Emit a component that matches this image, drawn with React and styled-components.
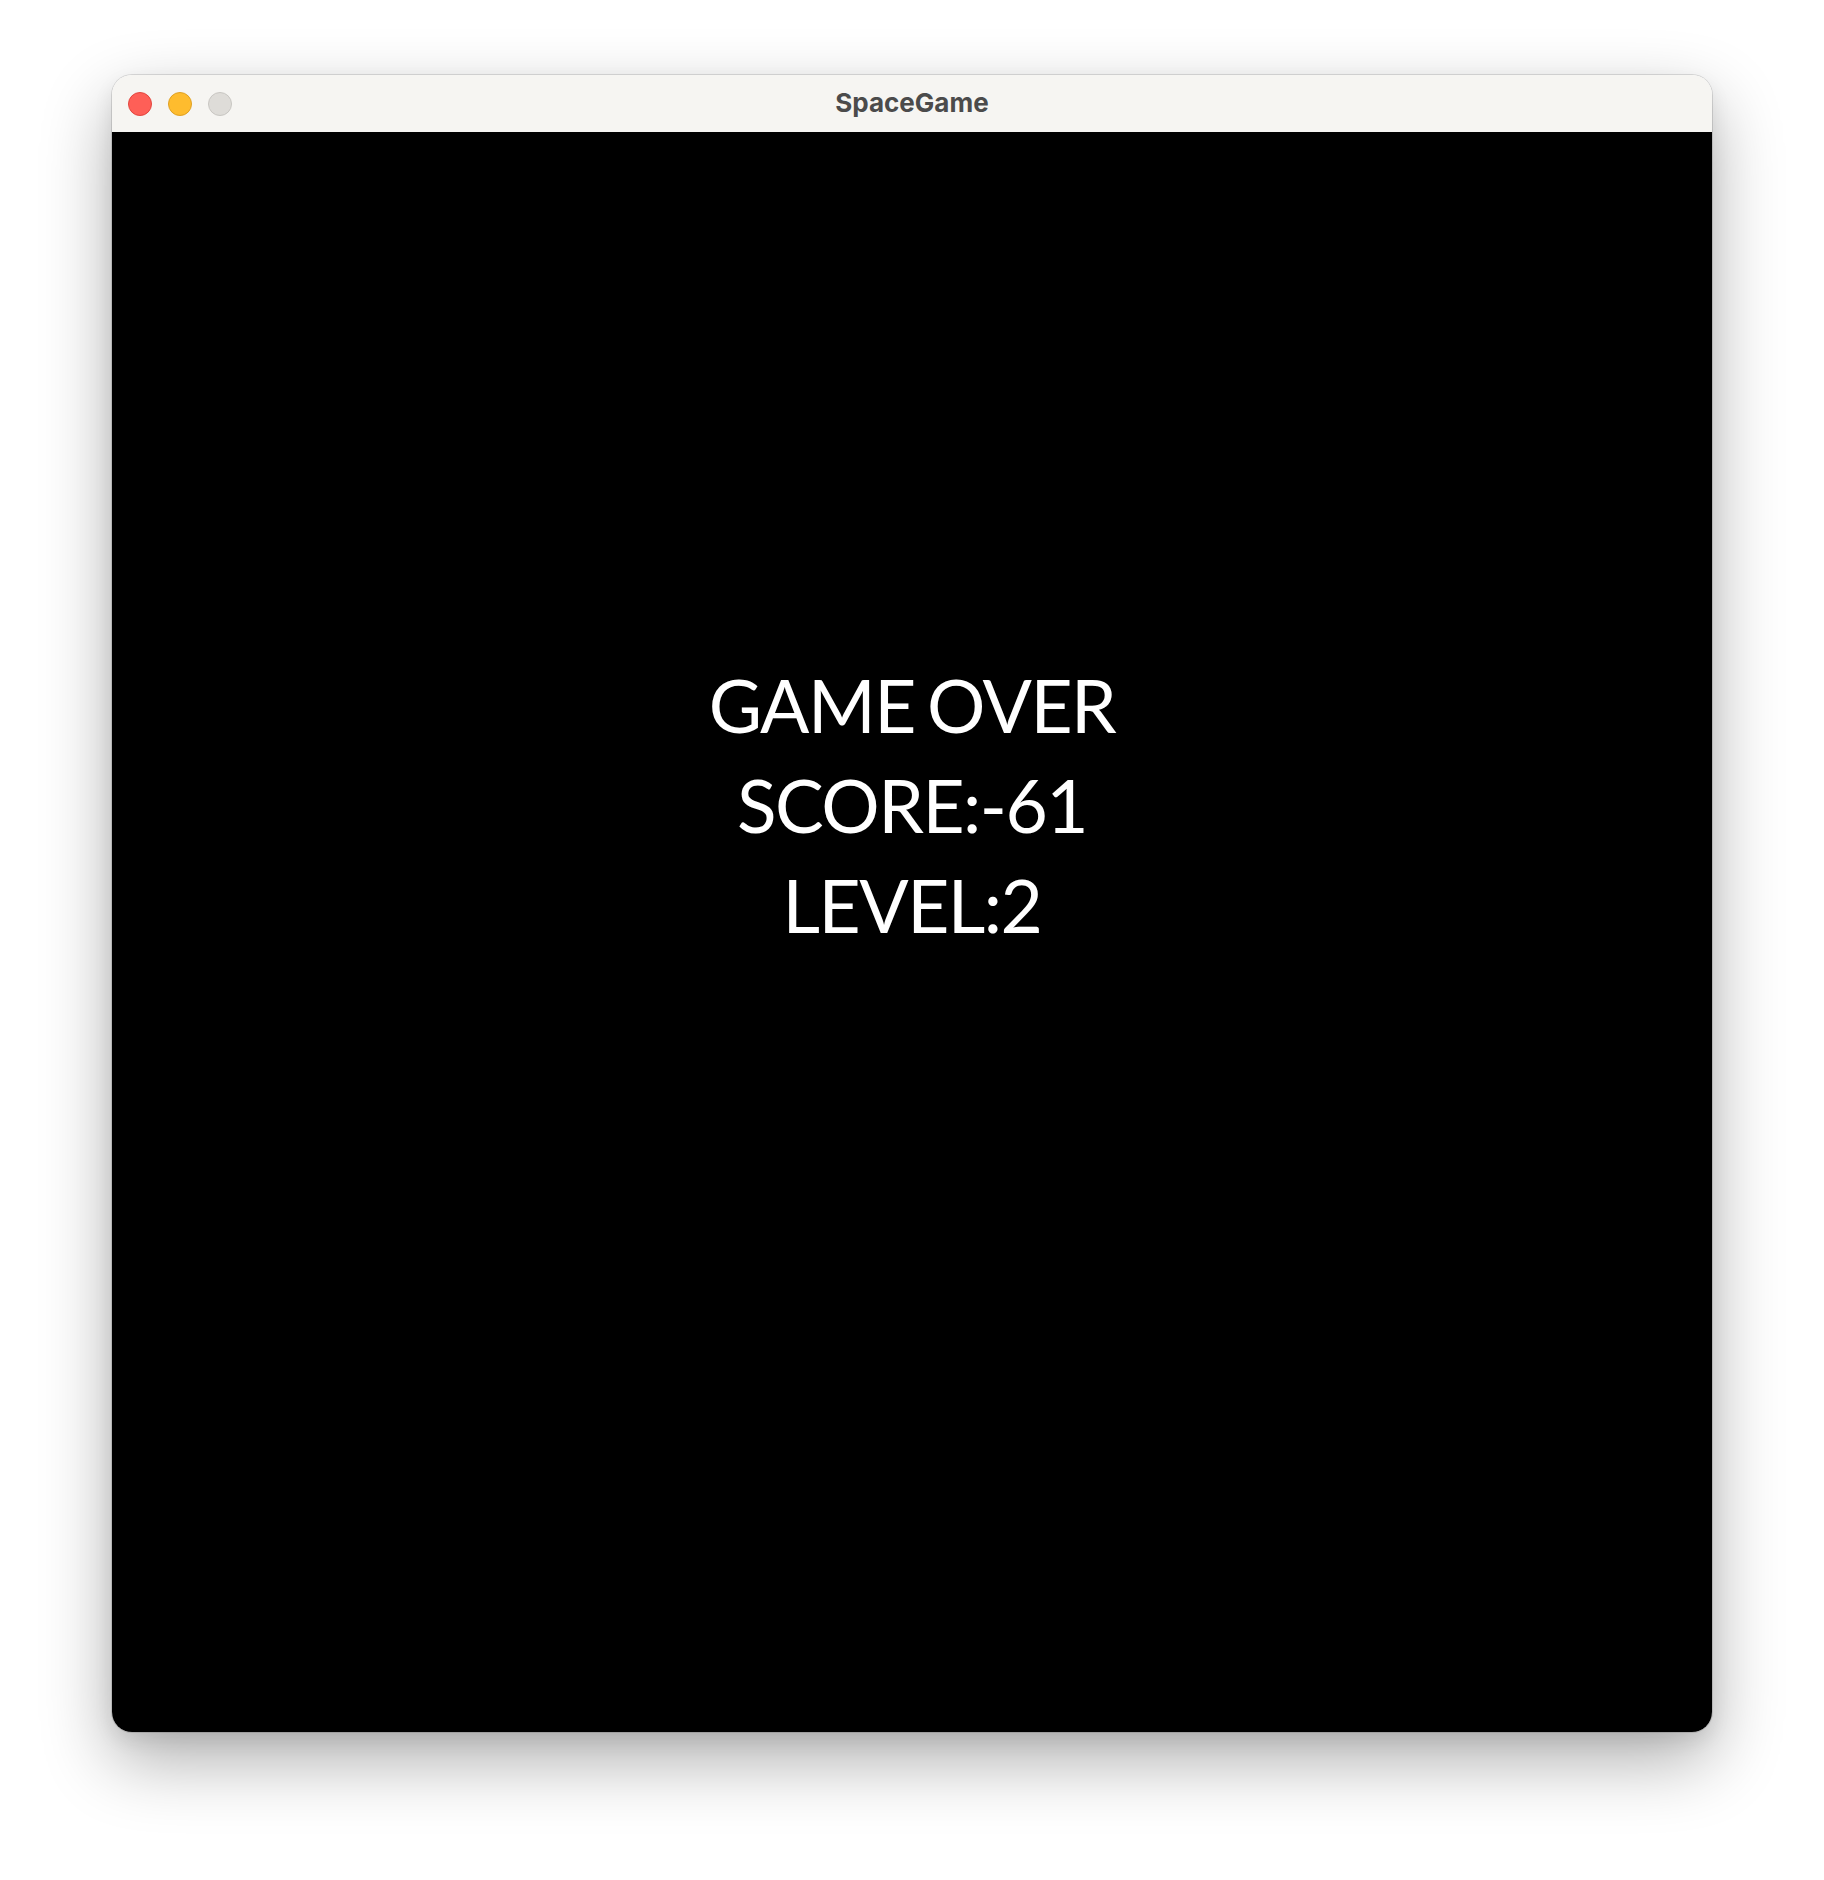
import React from "react";
import styled, { createGlobalStyle } from "styled-components";

const Global = createGlobalStyle`
  html, body { margin: 0; padding: 0; background: #ffffff; }
  #root { min-height: 1880px; }
`;

const Stage = styled.div`
  width: 1824px;
  height: 1880px;
  box-sizing: border-box;
  padding: 75px 0 0 112px;
`;

const Window = styled.div`
  width: 1600px;
  border-radius: 20px;
  overflow: hidden;
  box-shadow: 0 0 0 1px rgba(0, 0, 0, 0.12), 0 28px 70px rgba(0, 0, 0, 0.32), 0 8px 20px rgba(0, 0, 0, 0.08);
  display: flex;
  flex-direction: column;
`;

const TitleBar = styled.div`
  height: 57px;
  background: #f6f5f2;
  display: grid;
  grid-template-columns: 1fr auto 1fr;
  align-items: center;
  padding: 0 0 0 16px;
`;

const Lights = styled.div`
  display: flex;
  gap: 16px;
  align-items: center;
`;

const Light = styled.span`
  width: 24px;
  height: 24px;
  border-radius: 50%;
  box-sizing: border-box;
  background: ${(p) => p.$bg};
  border: 1px solid ${(p) => p.$edge};
`;

const Title = styled.div`
  font-family: Inter, "Liberation Sans", sans-serif;
  font-weight: 700;
  font-size: 26px;
  color: #4b4b4b;
  margin-left: -16px;
  margin-top: -2px;
`;

const Canvas = styled.div`
  height: 1600px;
  background: #000;
  display: flex;
  flex-direction: column;
  align-items: center;
  padding-top: 523px;
  box-sizing: border-box;
`;

const Line = styled.div`
  font-family: Lato, "Noto Sans", sans-serif;
  font-weight: 400;
  font-size: 73px;
  letter-spacing: -1.5px;
  word-spacing: -5px;
  line-height: 100px;
  color: #ffffff;
  white-space: pre;
`;

export default function App() {
  return (
    <>
      <Global />
      <Stage>
        <Window>
          <TitleBar>
            <Lights>
              <Light $bg="#fe5f57" $edge="#e2463f" />
              <Light $bg="#febc2e" $edge="#dfa023" />
              <Light $bg="#dedcd8" $edge="#c8c6c2" />
            </Lights>
            <Title>SpaceGame</Title>
            <span />
          </TitleBar>
          <Canvas>
            <Line>GAME OVER</Line>
            <Line>SCORE:-61</Line>
            <Line>LEVEL:2</Line>
          </Canvas>
        </Window>
      </Stage>
    </>
  );
}
